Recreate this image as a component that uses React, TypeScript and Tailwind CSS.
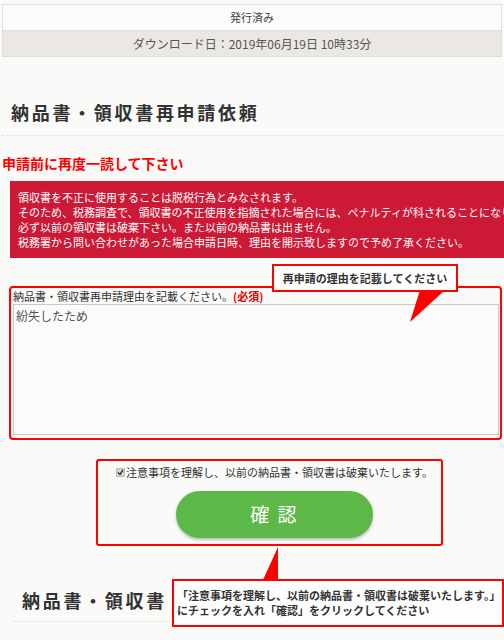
import React from "react";

export default function App() {
  return (
    <div className="relative w-[504px] h-[640px] overflow-hidden bg-[#fafaf9] font-['Noto_Sans_CJK_JP',sans-serif] text-[#333]">
      {/* status table */}
      <div className="mt-[4px] ml-[2px] w-[500px] border border-[#dedede]">
        <div className="h-[25px] flex items-center justify-center bg-[#fcfcfc] text-[11px] text-[#444]">
          発行済み
        </div>
        <div className="h-[26px] flex items-center justify-center border-t border-[#dedede] bg-[#ebe8e4] text-[12px] text-[#555]">
          ダウンロード日：2019年06月19日 10時33分
        </div>
      </div>

      {/* heading */}
      <div className="mt-[42px] ml-[2px] pb-[10px] border-b border-dotted border-[#d8d8d8]">
        <h2 className="w-fit pl-[9px] h-[26px] leading-[26px] text-[18px] font-bold tracking-[2.7px] text-[#333]">
          納品書・領収書再申請依頼
        </h2>
      </div>

      <p className="mt-[17px] ml-[2px] h-[20px] leading-[20px] text-[14px] font-bold text-[#ff0000]">
        申請前に再度一読して下さい
      </p>

      {/* warning box */}
      <div className="mt-[8px] ml-[10px] w-[520px] h-[77px] bg-[#cc1a36] pt-[9px] pl-[8px] text-white text-[11px] leading-[15px] whitespace-nowrap">
        <div>領収書を不正に使用することは脱税行為とみなされます。</div>
        <div>そのため、税務調査で、領収書の不正使用を指摘された場合には、ペナルティが科されることになります。</div>
        <div>必ず以前の領収書は破棄下さい。また以前の納品書は出ません。</div>
        <div>税務署から問い合わせがあった場合申請日時、理由を開示致しますので予め了承ください。</div>
      </div>

      {/* reason textarea */}
      <div className="mt-[28px] ml-[9px] w-[493px] h-[154px] border-2 border-[#ff0000] rounded-[4px] pl-[2px] pr-[1px] flex flex-col">
        <div className="h-[16px] leading-[16px] text-[11px] text-[#333] whitespace-nowrap">
          納品書・領収書再申請理由を記載ください。<span className="font-bold text-[#e60000]">(必須)</span>
        </div>
        <div className="h-[131px] border border-[#c8c8c8] bg-[#fbfbfb] px-[2px] pt-[3px] text-[12px] leading-[16px] text-[#555]">
          紛失したため
        </div>
      </div>

      {/* agree + confirm */}
      <div className="mt-[19px] ml-[96px] w-[347px] h-[87px] border-2 border-[#ff0000] rounded-[3px] pl-[10px] pt-[3px] flex flex-col items-center">
        <div className="h-[16px] flex items-center text-[11px] text-[#333] whitespace-nowrap">
          <span className="w-[9px] h-[9px] mr-[1px] bg-[#d6d6d6] border border-[#b5b5b5] rounded-[1px] flex items-center justify-center">
            <svg width="7" height="7" viewBox="0 0 7 7">
              <path d="M1 3.5 L3 5.5 L6 1" stroke="#333" strokeWidth="1.4" fill="none" />
            </svg>
          </span>
          注意事項を理解し、以前の納品書・領収書は破棄いたします。
        </div>
        <button className="mt-[11px] w-[197px] h-[47px] rounded-full bg-[#5cb947] shadow-[0_2px_3px_rgba(0,0,0,0.25)] text-white text-[19px] tracking-[2px] flex items-center justify-center">
          確 認
        </button>
      </div>

      {/* second heading */}
      <div className="mt-[41px] ml-[13px] pb-[8px] border-b border-dotted border-[#e0d8d8]">
        <h2 className="w-fit pl-[9px] h-[26px] leading-[26px] text-[18px] font-bold tracking-[2.7px] text-[#333]">
          納品書・領収書
        </h2>
      </div>

      {/* callout 1 */}
      <svg className="absolute left-[400px] top-[285px]" width="50" height="40" viewBox="0 0 50 40">
        <polygon points="20,5 45,5 10,37" fill="#ff0000" />
      </svg>
      <div className="absolute left-[272px] top-[264px] w-[186px] h-[28px] border-2 border-[#ff0000] bg-[#fdfdfd] flex items-center justify-center text-[11px] font-bold text-[#333] whitespace-nowrap">
        再申請の理由を記載してください
      </div>

      {/* callout 2 */}
      <svg className="absolute left-[255px] top-[540px]" width="30" height="45" viewBox="0 0 30 45">
        <polygon points="7,42 23,42 23,7" fill="#ff0000" />
      </svg>
      <div className="absolute left-[172px] top-[579px] w-[332px] h-[48px] border-2 border-[#ff0000] bg-[#fdfdfd] pl-[3px] flex flex-col justify-center text-[11px] leading-[15px] font-bold text-[#333] whitespace-nowrap">
        <div>「注意事項を理解し、以前の納品書・領収書は破棄いたします。」</div>
        <div>にチェックを入れ「確認」をクリックしてください</div>
      </div>
    </div>
  );
}
